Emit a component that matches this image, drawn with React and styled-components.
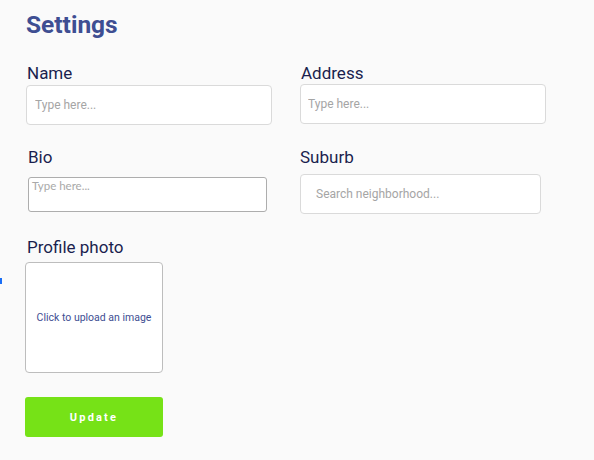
import React from "react";
import styled, { createGlobalStyle } from "styled-components";

const Global = createGlobalStyle`
  html, body { margin: 0; padding: 0; background: #fafafa; }
  body { font-family: Roboto, "Liberation Sans", sans-serif; }
  * { box-sizing: border-box; }
`;

const Page = styled.div`
  position: relative;
  width: 594px;
  height: 460px;
  padding: 10px 0 0 26px;
  background: #fafafa;
`;

const Title = styled.h1`
  margin: 0;
  font-size: 24.5px;
  line-height: 30px;
  font-weight: 700;
  color: #3e4e92;
`;

const Grid = styled.div`
  display: grid;
  grid-template-columns: 246px 246px;
  column-gap: 28px;
  row-gap: 22px;
  margin-top: 23px;
`;

const Field = styled.div`
  display: flex;
  flex-direction: column;
  align-items: flex-start;
  margin-left: ${(p) => p.$shift || 0}px;
`;

const Label = styled.label`
  font-size: 17px;
  line-height: 20px;
  font-weight: 400;
  color: #1a1f4e;
  padding-left: ${(p) => p.$pad ?? 1}px;
  margin-bottom: ${(p) => p.$gap}px;
`;

const Input = styled.input`
  width: ${(p) => p.$w}px;
  height: 40px;
  border: 1px solid #dadada;
  border-radius: 4px;
  background: #fff;
  padding: 0 0 0 ${(p) => p.$pad}px;
  font-family: Roboto, "Liberation Sans", sans-serif;
  font-size: 12px;
  outline: none;
  &::placeholder { color: #a5a5a5; }
`;

const TextArea = styled.textarea`
  width: 239px;
  height: 35px;
  border: 1px solid #adadad;
  border-radius: 3px;
  background: #fff;
  padding: 1px 3px;
  font-family: Lato, "Liberation Sans", sans-serif;
  font-size: 11.5px;
  line-height: 14px;
  resize: none;
  outline: none;
  &::placeholder { color: #a9a9a9; }
`;

const Section = styled.div`
  display: flex;
  flex-direction: column;
  align-items: flex-start;
  margin-top: 23px;
`;

const Upload = styled.div`
  width: 138px;
  height: 111px;
  margin-left: -1px;
  border: 1px solid #bdbdbd;
  border-radius: 4px;
  background: #fff;
  display: flex;
  align-items: center;
  justify-content: center;
  font-size: 10.5px;
  color: #3e4e92;
  cursor: pointer;
`;

const Button = styled.button`
  width: 138px;
  height: 40px;
  margin: 24px 0 0 -1px;
  border: none;
  border-radius: 3px;
  background: #76e217;
  color: #fff;
  font-family: Roboto, "Liberation Sans", sans-serif;
  font-size: 11px;
  font-weight: 700;
  letter-spacing: 2.2px;
  cursor: pointer;
`;

const FocusMark = styled.span`
  position: absolute;
  left: 0;
  top: 278px;
  width: 2px;
  height: 6px;
  background: #1a6ef5;
`;

export default function App() {
  return (
    <Page>
      <Global />
      <FocusMark />
      <Title>Settings</Title>
      <Grid>
        <Field>
          <Label $gap={2}>Name</Label>
          <Input $w={246} $pad={8} placeholder="Type here..." />
        </Field>
        <Field $shift={0}>
          <Label $gap={1} $pad={1}>Address</Label>
          <Input $w={246} $pad={7} placeholder="Type here..." />
        </Field>
        <Field $shift={2}>
          <Label $gap={10} $pad={0}>Bio</Label>
          <TextArea placeholder="Type here..." />
        </Field>
        <Field>
          <Label $gap={7} $pad={0}>Suburb</Label>
          <Input $w={241} $pad={15} placeholder="Search neighborhood..." />
        </Field>
      </Grid>
      <Section>
        <Label $gap={5}>Profile photo</Label>
        <Upload>Click to upload an image</Upload>
        <Button>Update</Button>
      </Section>
    </Page>
  );
}
